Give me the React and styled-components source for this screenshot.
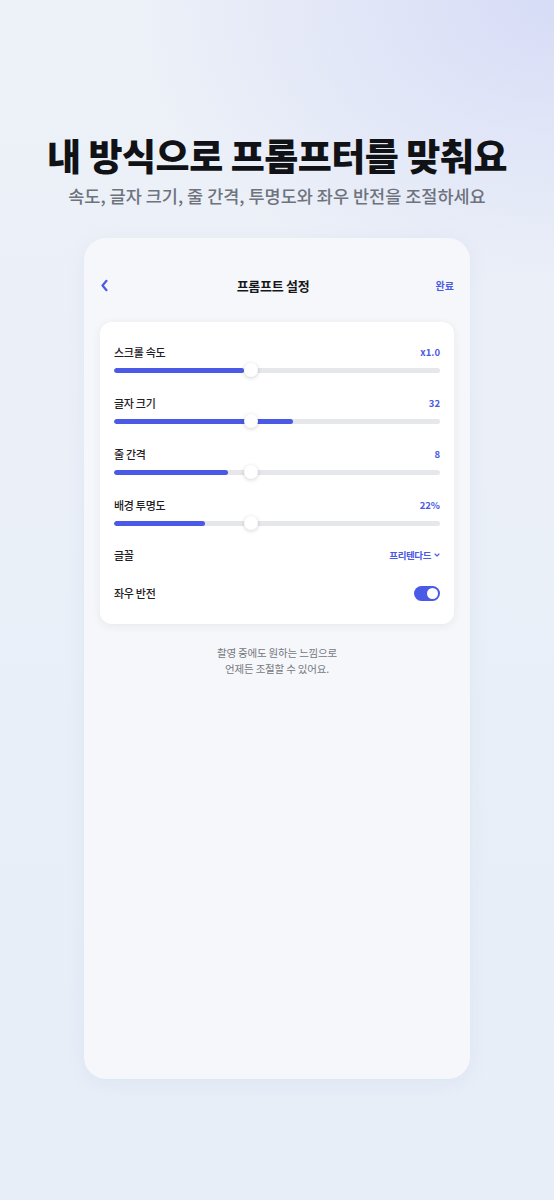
import React from 'react'
import styled, { createGlobalStyle } from 'styled-components'

const blue = '#4a5ae6'

const GlobalStyle = createGlobalStyle`
  html, body {
    margin: 0;
    padding: 0;
  }
  body {
    font-family: "Noto Sans CJK KR", "Noto Sans", sans-serif;
    background: #e9eff8;
  }
`

const sliders = [
  { label: '스크롤 속도', value: 'x1.0', fill: 40, thumb: 42 },
  { label: '글자 크기', value: '32', fill: 55, thumb: 42 },
  { label: '줄 간격', value: '8', fill: 35, thumb: 42 },
  { label: '배경 투명도', value: '22%', fill: 28, thumb: 42 },
]

const Page = styled.div`
  width: 554px;
  height: 1200px;
  box-sizing: border-box;
  padding-top: 130px;
  display: flex;
  flex-direction: column;
  align-items: center;
  background:
    radial-gradient(ellipse 420px 300px at 100% 0%, rgba(214, 219, 247, 0.95), rgba(214, 219, 247, 0) 100%),
    linear-gradient(180deg, #edf1f8 0%, #e9eff8 60%, #e7eef8 100%);
  overflow: hidden;
`

const Headline = styled.h1`
  margin: 0;
  font-size: 37px;
  line-height: 50px;
  font-weight: 800;
  letter-spacing: -0.5px;
  color: #111216;
`

const Subline = styled.p`
  margin: 3px 0 0;
  font-size: 17.5px;
  line-height: 26px;
  font-weight: 500;
  letter-spacing: 0;
  color: #6e737d;
`

const Panel = styled.div`
  margin-top: 29px;
  width: 386px;
  height: 841px;
  box-sizing: border-box;
  padding: 34px 16px 0;
  border-radius: 22px;
  background: #f6f7fa;
  box-shadow: 0 4px 18px rgba(150, 165, 200, 0.12);
  display: flex;
  flex-direction: column;
`

const Header = styled.div`
  height: 26px;
  display: grid;
  grid-template-columns: 40px 1fr 40px;
  align-items: center;
`

const BackButton = styled.div`
  display: flex;
  align-items: center;
  color: ${blue};
`

const HeaderTitle = styled.div`
  text-align: center;
  padding-right: 8px;
  font-size: 13px;
  font-weight: 700;
  letter-spacing: -0.3px;
  color: #16171b;
`

const Done = styled.div`
  text-align: right;
  font-size: 10px;
  font-weight: 700;
  color: ${blue};
`

const Card = styled.div`
  margin-top: 24px;
  background: #ffffff;
  border-radius: 12px;
  box-shadow: 0 2px 10px rgba(30, 40, 80, 0.07);
  padding: 22px 14px 21px;
  display: flex;
  flex-direction: column;
`

const SliderList = styled.div`
  display: flex;
  flex-direction: column;
  gap: 18px;
`

const SliderRow = styled.div`
  display: flex;
  flex-direction: column;
  gap: 3px;
`

const LabelRow = styled.div`
  height: 16px;
  display: flex;
  justify-content: space-between;
  align-items: center;
`

const Label = styled.span`
  font-size: 11px;
  font-weight: 500;
  letter-spacing: -0.3px;
  color: #1f2024;
`

const Value = styled.span`
  font-size: 9.5px;
  font-weight: 700;
  color: ${blue};
`

const Track = styled.div`
  position: relative;
  height: 14px;
  display: flex;
  align-items: center;
`

const Rail = styled.div`
  width: 100%;
  height: 5px;
  border-radius: 3px;
  background: #e6e7eb;
  overflow: hidden;
`

const Fill = styled.div`
  height: 100%;
  border-radius: 3px;
  background: ${blue};
`

const Thumb = styled.div`
  position: absolute;
  top: 0;
  width: 14px;
  height: 14px;
  margin-left: -7px;
  border-radius: 50%;
  background: #ffffff;
  box-shadow: 0 1px 4px rgba(0, 0, 0, 0.18);
`

const OptionRow = styled.div`
  height: 20px;
  display: flex;
  justify-content: space-between;
  align-items: center;
  margin-top: ${p => p.$top}px;
`

const Select = styled.span`
  display: flex;
  align-items: center;
  gap: 3px;
  font-size: 9.5px;
  font-weight: 700;
  letter-spacing: -0.4px;
  color: ${blue};
`

const Toggle = styled.div`
  width: 26px;
  height: 15px;
  border-radius: 8px;
  background: ${blue};
  display: flex;
  align-items: center;
  justify-content: flex-end;
  padding: 0 2px;
  box-sizing: border-box;
`

const Knob = styled.div`
  width: 11px;
  height: 11px;
  border-radius: 50%;
  background: #ffffff;
`

const Caption = styled.p`
  margin: 21px 0 0;
  text-align: center;
  font-size: 10.5px;
  line-height: 16px;
  letter-spacing: -0.2px;
  color: #75787f;
`

function Slider({ label, value, fill, thumb }) {
  return (
    <SliderRow>
      <LabelRow>
        <Label>{label}</Label>
        <Value>{value}</Value>
      </LabelRow>
      <Track>
        <Rail>
          <Fill style={{ width: `${fill}%` }} />
        </Rail>
        <Thumb style={{ left: `${thumb}%` }} />
      </Track>
    </SliderRow>
  )
}

export default function App() {
  return (
    <Page>
      <GlobalStyle />
      <Headline>내 방식으로 프롬프터를 맞춰요</Headline>
      <Subline>속도, 글자 크기, 줄 간격, 투명도와 좌우 반전을 조절하세요</Subline>
      <Panel>
        <Header>
          <BackButton>
            <svg width="9" height="13" viewBox="0 0 9 13" fill="none">
              <path d="M6.5 1.8L2.5 6.5L6.5 11.2" stroke="currentColor" strokeWidth="2.2" strokeLinecap="round" strokeLinejoin="round" />
            </svg>
          </BackButton>
          <HeaderTitle>프롬프트 설정</HeaderTitle>
          <Done>완료</Done>
        </Header>
        <Card>
          <SliderList>
            {sliders.map(s => (
              <Slider key={s.label} {...s} />
            ))}
          </SliderList>
          <OptionRow $top={15}>
            <Label>글꼴</Label>
            <Select>
              프리텐다드
              <svg width="6" height="4" viewBox="0 0 6 4" fill="none">
                <path d="M1 1L3 3L5 1" stroke="currentColor" strokeWidth="1.1" strokeLinecap="round" strokeLinejoin="round" />
              </svg>
            </Select>
          </OptionRow>
          <OptionRow $top={18}>
            <Label>좌우 반전</Label>
            <Toggle>
              <Knob />
            </Toggle>
          </OptionRow>
        </Card>
        <Caption>
          촬영 중에도 원하는 느낌으로
          <br />
          언제든 조절할 수 있어요.
        </Caption>
      </Panel>
    </Page>
  )
}
